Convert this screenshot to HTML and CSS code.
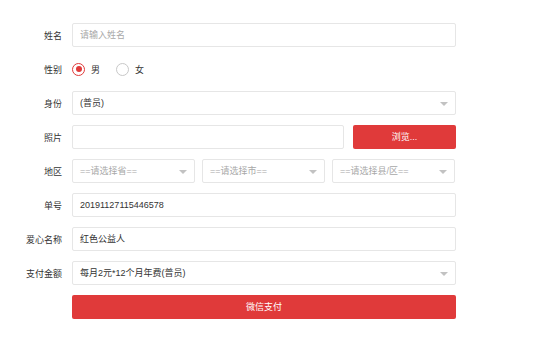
FILE: index.html
```html
<!DOCTYPE html>
<html lang="zh-CN">
<head>
<meta charset="utf-8">
<link rel="stylesheet" href="styles.css">
</head>
<body>
<form class="form">
  <div class="row">
    <label class="label">姓名</label>
    <div class="field"><div class="box placeholder">请输入姓名</div></div>
  </div>
  <div class="row">
    <label class="label">性别</label>
    <div class="field radios">
      <span class="radio checked"></span><span class="rtext">男</span>
      <span class="radio"></span><span class="rtext">女</span>
    </div>
  </div>
  <div class="row">
    <label class="label">身份</label>
    <div class="field"><div class="box select">(普员)<i class="arrow"></i></div></div>
  </div>
  <div class="row">
    <label class="label">照片</label>
    <div class="field photo">
      <div class="box"></div>
      <div class="btn">浏览...</div>
    </div>
  </div>
  <div class="row">
    <label class="label">地区</label>
    <div class="field area">
      <div class="box select placeholder">==请选择省==<i class="arrow"></i></div>
      <div class="box select placeholder">==请选择市==<i class="arrow"></i></div>
      <div class="box select placeholder">==请选择县/区==<i class="arrow"></i></div>
    </div>
  </div>
  <div class="row">
    <label class="label">单号</label>
    <div class="field"><div class="box">20191127115446578</div></div>
  </div>
  <div class="row">
    <label class="label">爱心名称</label>
    <div class="field"><div class="box">红色公益人</div></div>
  </div>
  <div class="row">
    <label class="label">支付金额</label>
    <div class="field"><div class="box select">每月2元*12个月年费(普员)<i class="arrow"></i></div></div>
  </div>
  <div class="row">
    <span class="label"></span>
    <div class="field"><div class="btn pay">微信支付</div></div>
  </div>
</form>
</body>
</html>
```
FILE: styles.css
```css
* { box-sizing: border-box; }
html, body { margin: 0; padding: 0; background: #fff; }
body {
  font-family: "Liberation Sans", "Noto Sans CJK SC", sans-serif;
  font-size: 9px;
  color: #333;
}
.form { padding-top: 23px; width: 553px; }
.row {
  display: flex;
  align-items: center;
  height: 24px;
  margin-bottom: 10px;
}
.label {
  width: 62px;
  text-align: right;
  color: #333;
  flex: none;
}
.field {
  margin-left: 10px;
  width: 384px;
  height: 24px;
}
.box {
  position: relative;
  height: 24px;
  border: 1px solid #e6e6e6;
  border-radius: 2px;
  padding-left: 7px;
  line-height: 22px;
  color: #333;
  white-space: nowrap;
  overflow: hidden;
  background: #fff;
}
.placeholder { color: #a8a8a8; }
.arrow {
  position: absolute;
  right: 7px;
  top: 10px;
  width: 0;
  height: 0;
  border-left: 4px solid transparent;
  border-right: 4px solid transparent;
  border-top: 4px solid #c2c2c2;
}
.radios {
  display: flex;
  align-items: center;
}
.radio {
  width: 13px;
  height: 13px;
  border: 1px solid #c8c8c8;
  border-radius: 50%;
  position: relative;
  flex: none;
}
.radio.checked { border-color: #e03a3a; }
.radio.checked::after {
  content: "";
  position: absolute;
  left: 2.5px;
  top: 2.5px;
  width: 6px;
  height: 6px;
  border-radius: 50%;
  background: #e03a3a;
}
.rtext { margin-left: 6px; margin-right: 16px; }
.photo {
  display: flex;
  gap: 9px;
}
.photo .box { flex: 1; }
.btn {
  height: 24px;
  background: #e03a3a;
  color: #fff;
  border-radius: 2px;
  text-align: center;
  line-height: 24px;
}
.photo .btn { width: 103px; flex: none; }
.area {
  display: grid;
  grid-template-columns: 123px 123px 123px;
  column-gap: 7px;
}
.pay { width: 384px; }
```
